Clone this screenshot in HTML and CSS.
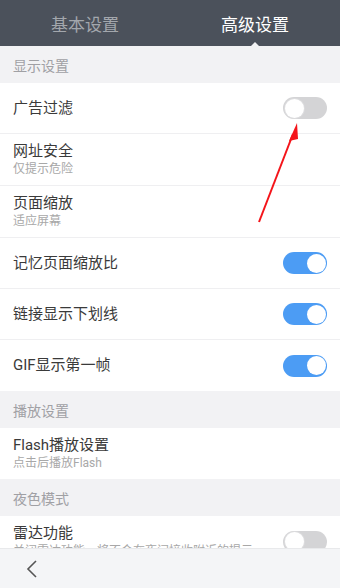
FILE: index.html
```html
<!DOCTYPE html>
<html lang="zh-CN">
<head>
    <meta charset="UTF-8">
    <title>设置</title>
    <link rel="stylesheet" href="styles.css">
</head>
<body>

<div class="page">
    <div class="tabs">
        <div class="tab">基本设置</div>
        <div class="tab active">高级设置</div>
    </div>

    <div class="list">
        <div class="section">显示设置</div>
        <div class="row">
            <div class="label">广告过滤</div>
            <div class="switch"></div>
        </div>
        <div class="row two">
            <div class="label">网址安全<span class="sub">仅提示危险</span></div>
        </div>
        <div class="row two">
            <div class="label">页面缩放<span class="sub">适应屏幕</span></div>
        </div>
        <div class="row">
            <div class="label">记忆页面缩放比</div>
            <div class="switch on"></div>
        </div>
        <div class="row">
            <div class="label">链接显示下划线</div>
            <div class="switch on"></div>
        </div>
        <div class="row last">
            <div class="label">GIF显示第一帧</div>
            <div class="switch on"></div>
        </div>

        <div class="section">播放设置</div>
        <div class="row two last">
            <div class="label">Flash播放设置<span class="sub">点击后播放Flash</span></div>
        </div>

        <div class="section">夜色模式</div>
        <div class="row two">
            <div class="label">雷达功能<span class="sub">关闭雷达功能，将不会在夜间接收附近的提示</span></div>
            <div class="switch"></div>
        </div>
    </div>

    <div class="bottom">
        <svg class="back" width="14" height="20" viewBox="0 0 14 20">
            <path d="M11 2 L3 10 L11 18" fill="none" stroke="#555" stroke-width="1.6"/>
        </svg>
    </div>

    <svg class="arrow" width="340" height="588" viewBox="0 0 340 588">
        <line x1="259" y1="222" x2="293" y2="134" stroke="#f4141a" stroke-width="2"/>
        <polygon points="297,123 289,141 298,139" fill="#f4141a"/>
    </svg>
</div>

</body>
</html>
```

FILE: styles.css
```css
* {
    margin: 0;
    padding: 0;
    box-sizing: border-box;
}

body {
    font-family: Roboto, "Noto Sans CJK SC", sans-serif;
    background: #fff;
}

.page {
    position: relative;
    display: flex;
    flex-direction: column;
    width: 340px;
    height: 588px;
    overflow: hidden;
}

.tabs {
    display: flex;
    flex: none;
    height: 46px;
    background: #4b515b;
}

.tab {
    position: relative;
    flex: 1;
    display: flex;
    justify-content: center;
    align-items: center;
    font-size: 17px;
    color: #a3a7ad;
}

.tab.active {
    color: #fff;
}

.tab.active:after {
    content: "";
    position: absolute;
    left: 50%;
    bottom: 0;
    margin-left: -4px;
    border-left: 4px solid transparent;
    border-right: 4px solid transparent;
    border-bottom: 4px solid #f2f2f4;
}

.list {
    flex: 1;
    overflow: hidden;
}

.section {
    display: flex;
    align-items: center;
    height: 37px;
    padding-left: 13px;
    background: #f2f2f4;
    font-size: 14px;
    color: #a0a0a4;
}

.row {
    display: flex;
    justify-content: space-between;
    align-items: center;
    height: 51px;
    padding: 0 13px;
    border-bottom: 1px solid #efeff1;
}

.row.two {
    height: 52px;
}

.row.last {
    border-bottom: none;
}

.row.two.last {
    height: 51px;
}

.label {
    display: flex;
    flex-direction: column;
    font-size: 15px;
    color: #3a3a3a;
    line-height: 19px;
}

.sub {
    font-size: 12px;
    color: #a8a8a8;
    line-height: 16px;
}

.switch {
    position: relative;
    width: 44px;
    height: 22px;
    border-radius: 11px;
    background: #d4d4d6;
}

.switch:after {
    content: "";
    position: absolute;
    top: 1px;
    left: 1px;
    width: 20px;
    height: 20px;
    border-radius: 50%;
    background: #fff;
    box-shadow: 0 0 0 1px #dcdcde;
    box-sizing: border-box;
    width: 19px;
    height: 19px;
    top: 1.5px;
    left: 1.5px;
}

.switch.on {
    background: #4c9cf4;
}

.switch.on:after {
    left: auto;
    right: 1.5px;
    box-shadow: none;
}

.bottom {
    flex: none;
    display: flex;
    align-items: center;
    height: 40px;
    padding-left: 25px;
    background: #f4f5f7;
    border-top: 1px solid #e8e9eb;
}

.arrow {
    position: absolute;
    top: 0;
    left: 0;
    pointer-events: none;
}
```
